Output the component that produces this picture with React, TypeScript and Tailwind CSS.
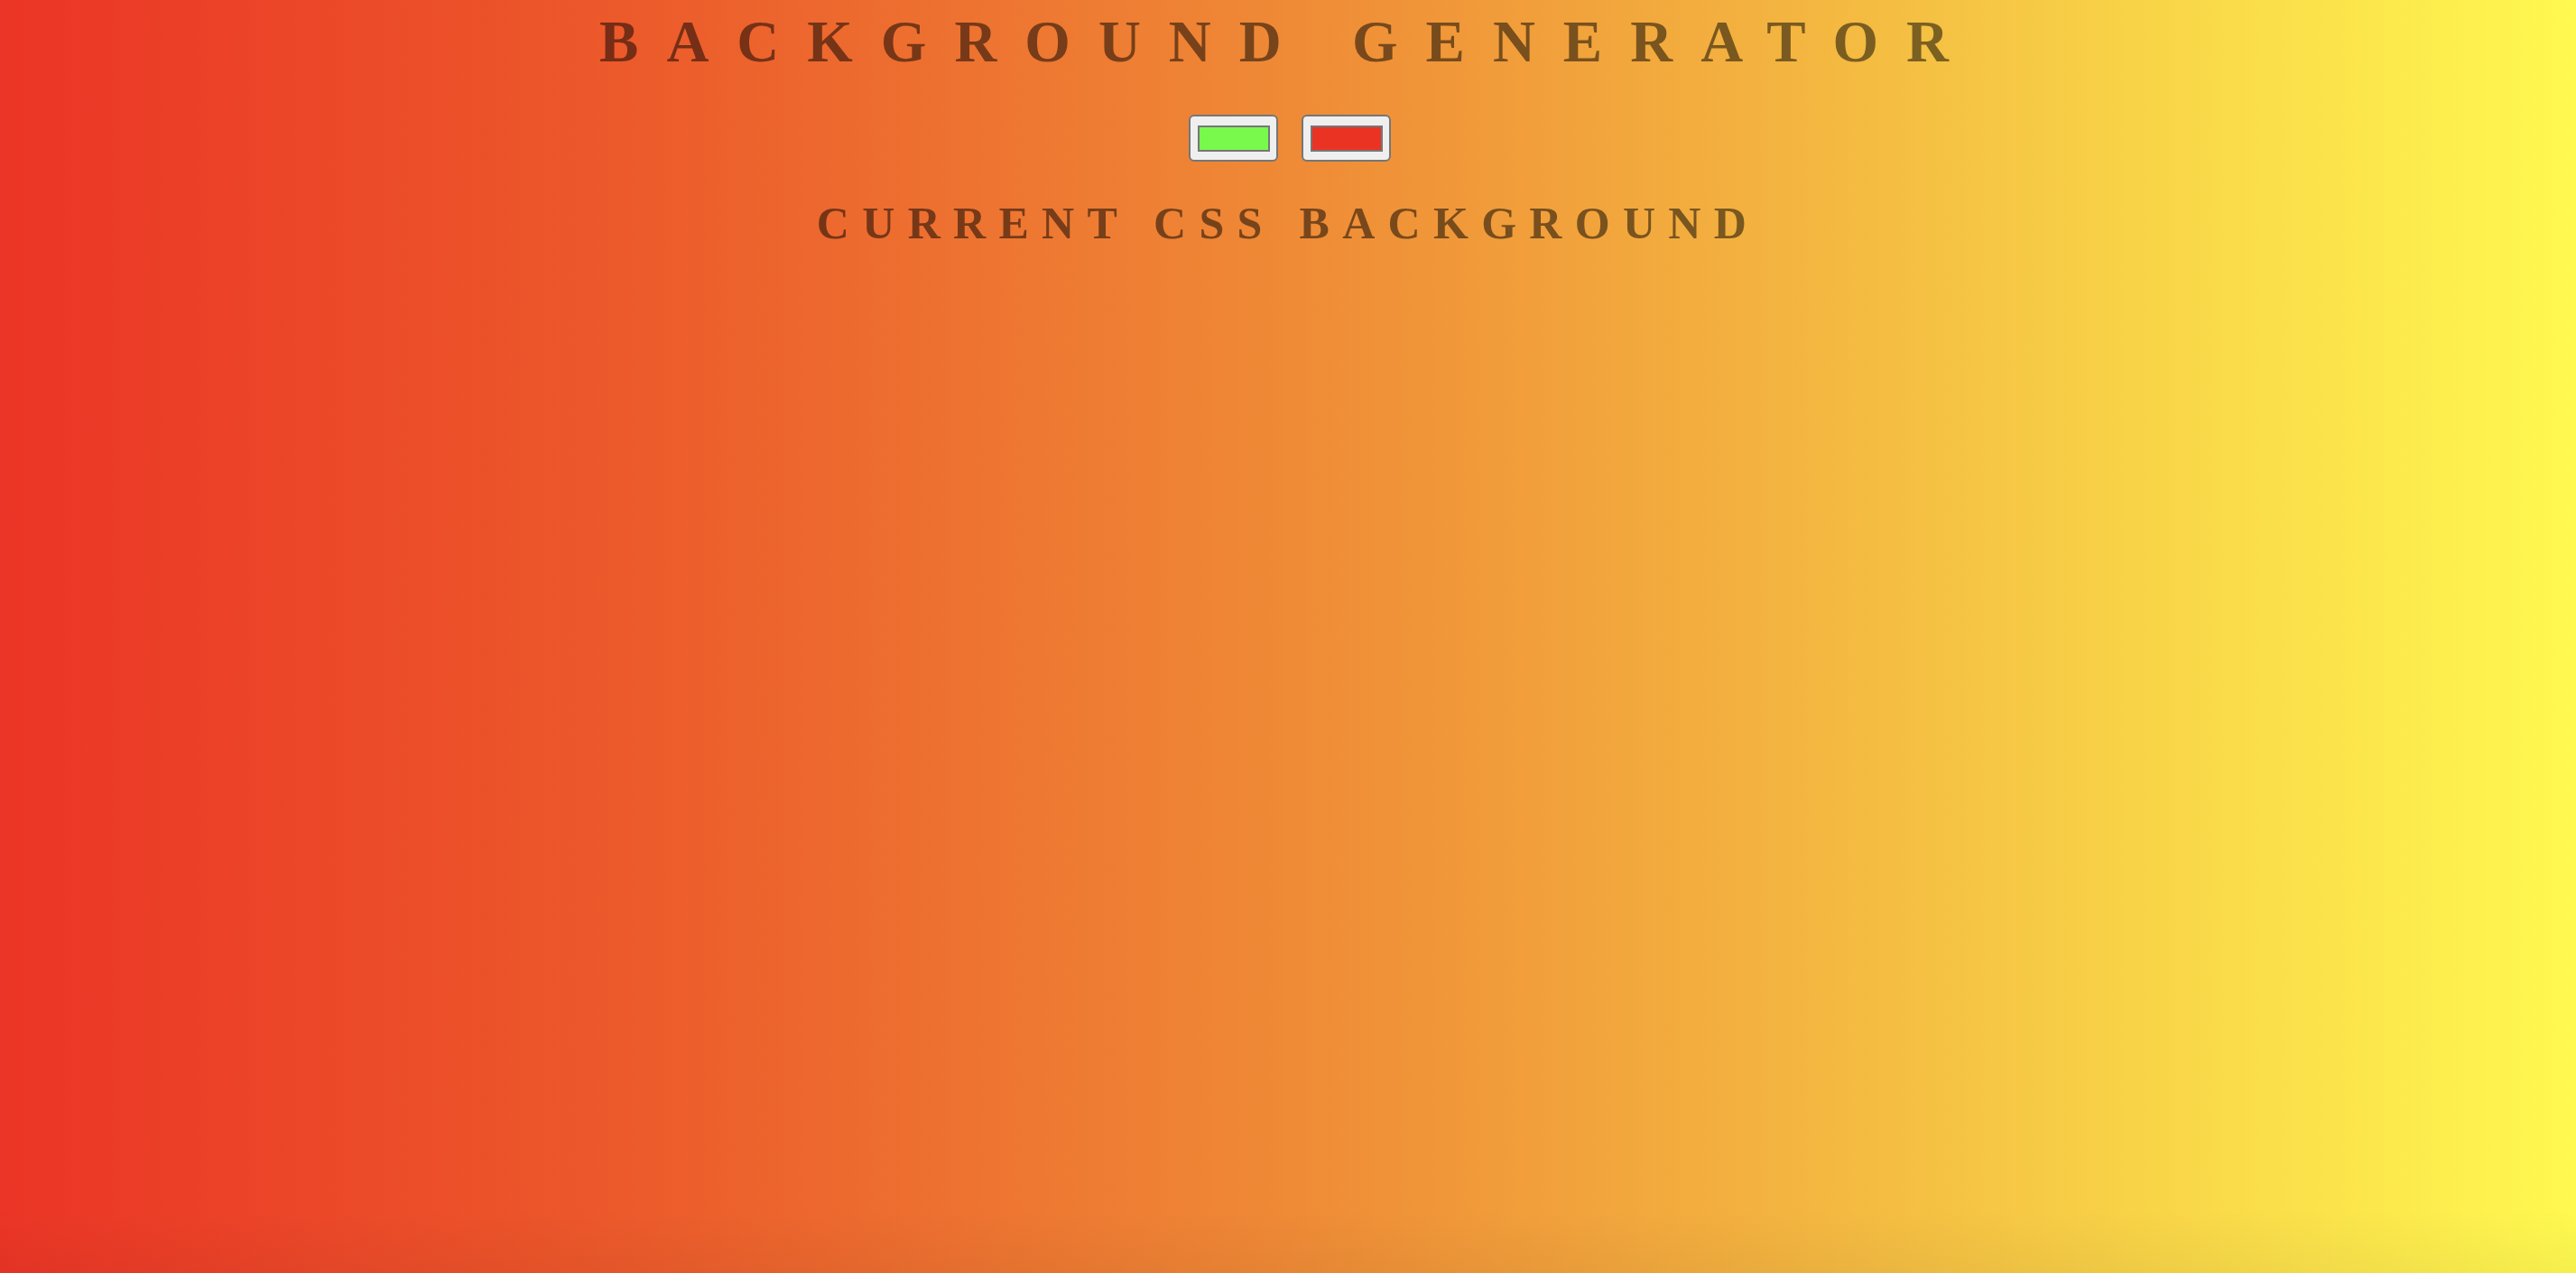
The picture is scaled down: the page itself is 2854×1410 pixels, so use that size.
import { useState } from 'react';

type SwatchProps = {
  color: string;
  onChange: (value: string) => void;
};

// Bouton de sélection de couleur (aspect d'un input type="color")
const Swatch = ({ color, onChange }: SwatchProps) => {
  return (
    <label className="flex items-center justify-center w-[99px] h-[52px] bg-[#efefef] border-2 border-[#767676] rounded-[6px] cursor-pointer">
      <input
        type="color"
        value={color}
        onChange={(e) => onChange(e.target.value)}
        className="sr-only"
      />
      <div
        className="w-[80px] h-[29px] border-2 border-[#767676]"
        style={{ backgroundColor: color }}
      ></div>
    </label>
  );
};

const App = () => {
  const [color1, setColor1] = useState('#78f94b');
  const [color2, setColor2] = useState('#eb3323');

  return (
    <div className="min-h-screen w-full bg-[linear-gradient(to_bottom,transparent_calc(100%-70px),rgba(0,0,0,0.04)),linear-gradient(to_right,#eb3526_0%,#ec5b2b_25%,#ef8a36_50%,#f5c143_75%,#fff950_100%)] font-['Liberation_Serif',serif] text-black/50 flex flex-col items-center">
      {/* Titre principal */}
      <h1 className="pt-[10px] w-full text-center text-[65px] leading-[72px] font-bold tracking-[31px] uppercase">
        Background Generator
      </h1>

      {/* Sélecteurs de couleurs */}
      <div className="flex gap-[26px] mt-[45px] ml-[4px]">
        <Swatch color={color1} onChange={setColor1} />
        <Swatch color={color2} onChange={setColor2} />
      </div>

      <h3 className="mt-[40px] w-full text-center text-[50px] leading-[56px] font-bold tracking-[14.3px] uppercase">
        Current CSS Background
      </h3>
    </div>
  );
};

export default App;
